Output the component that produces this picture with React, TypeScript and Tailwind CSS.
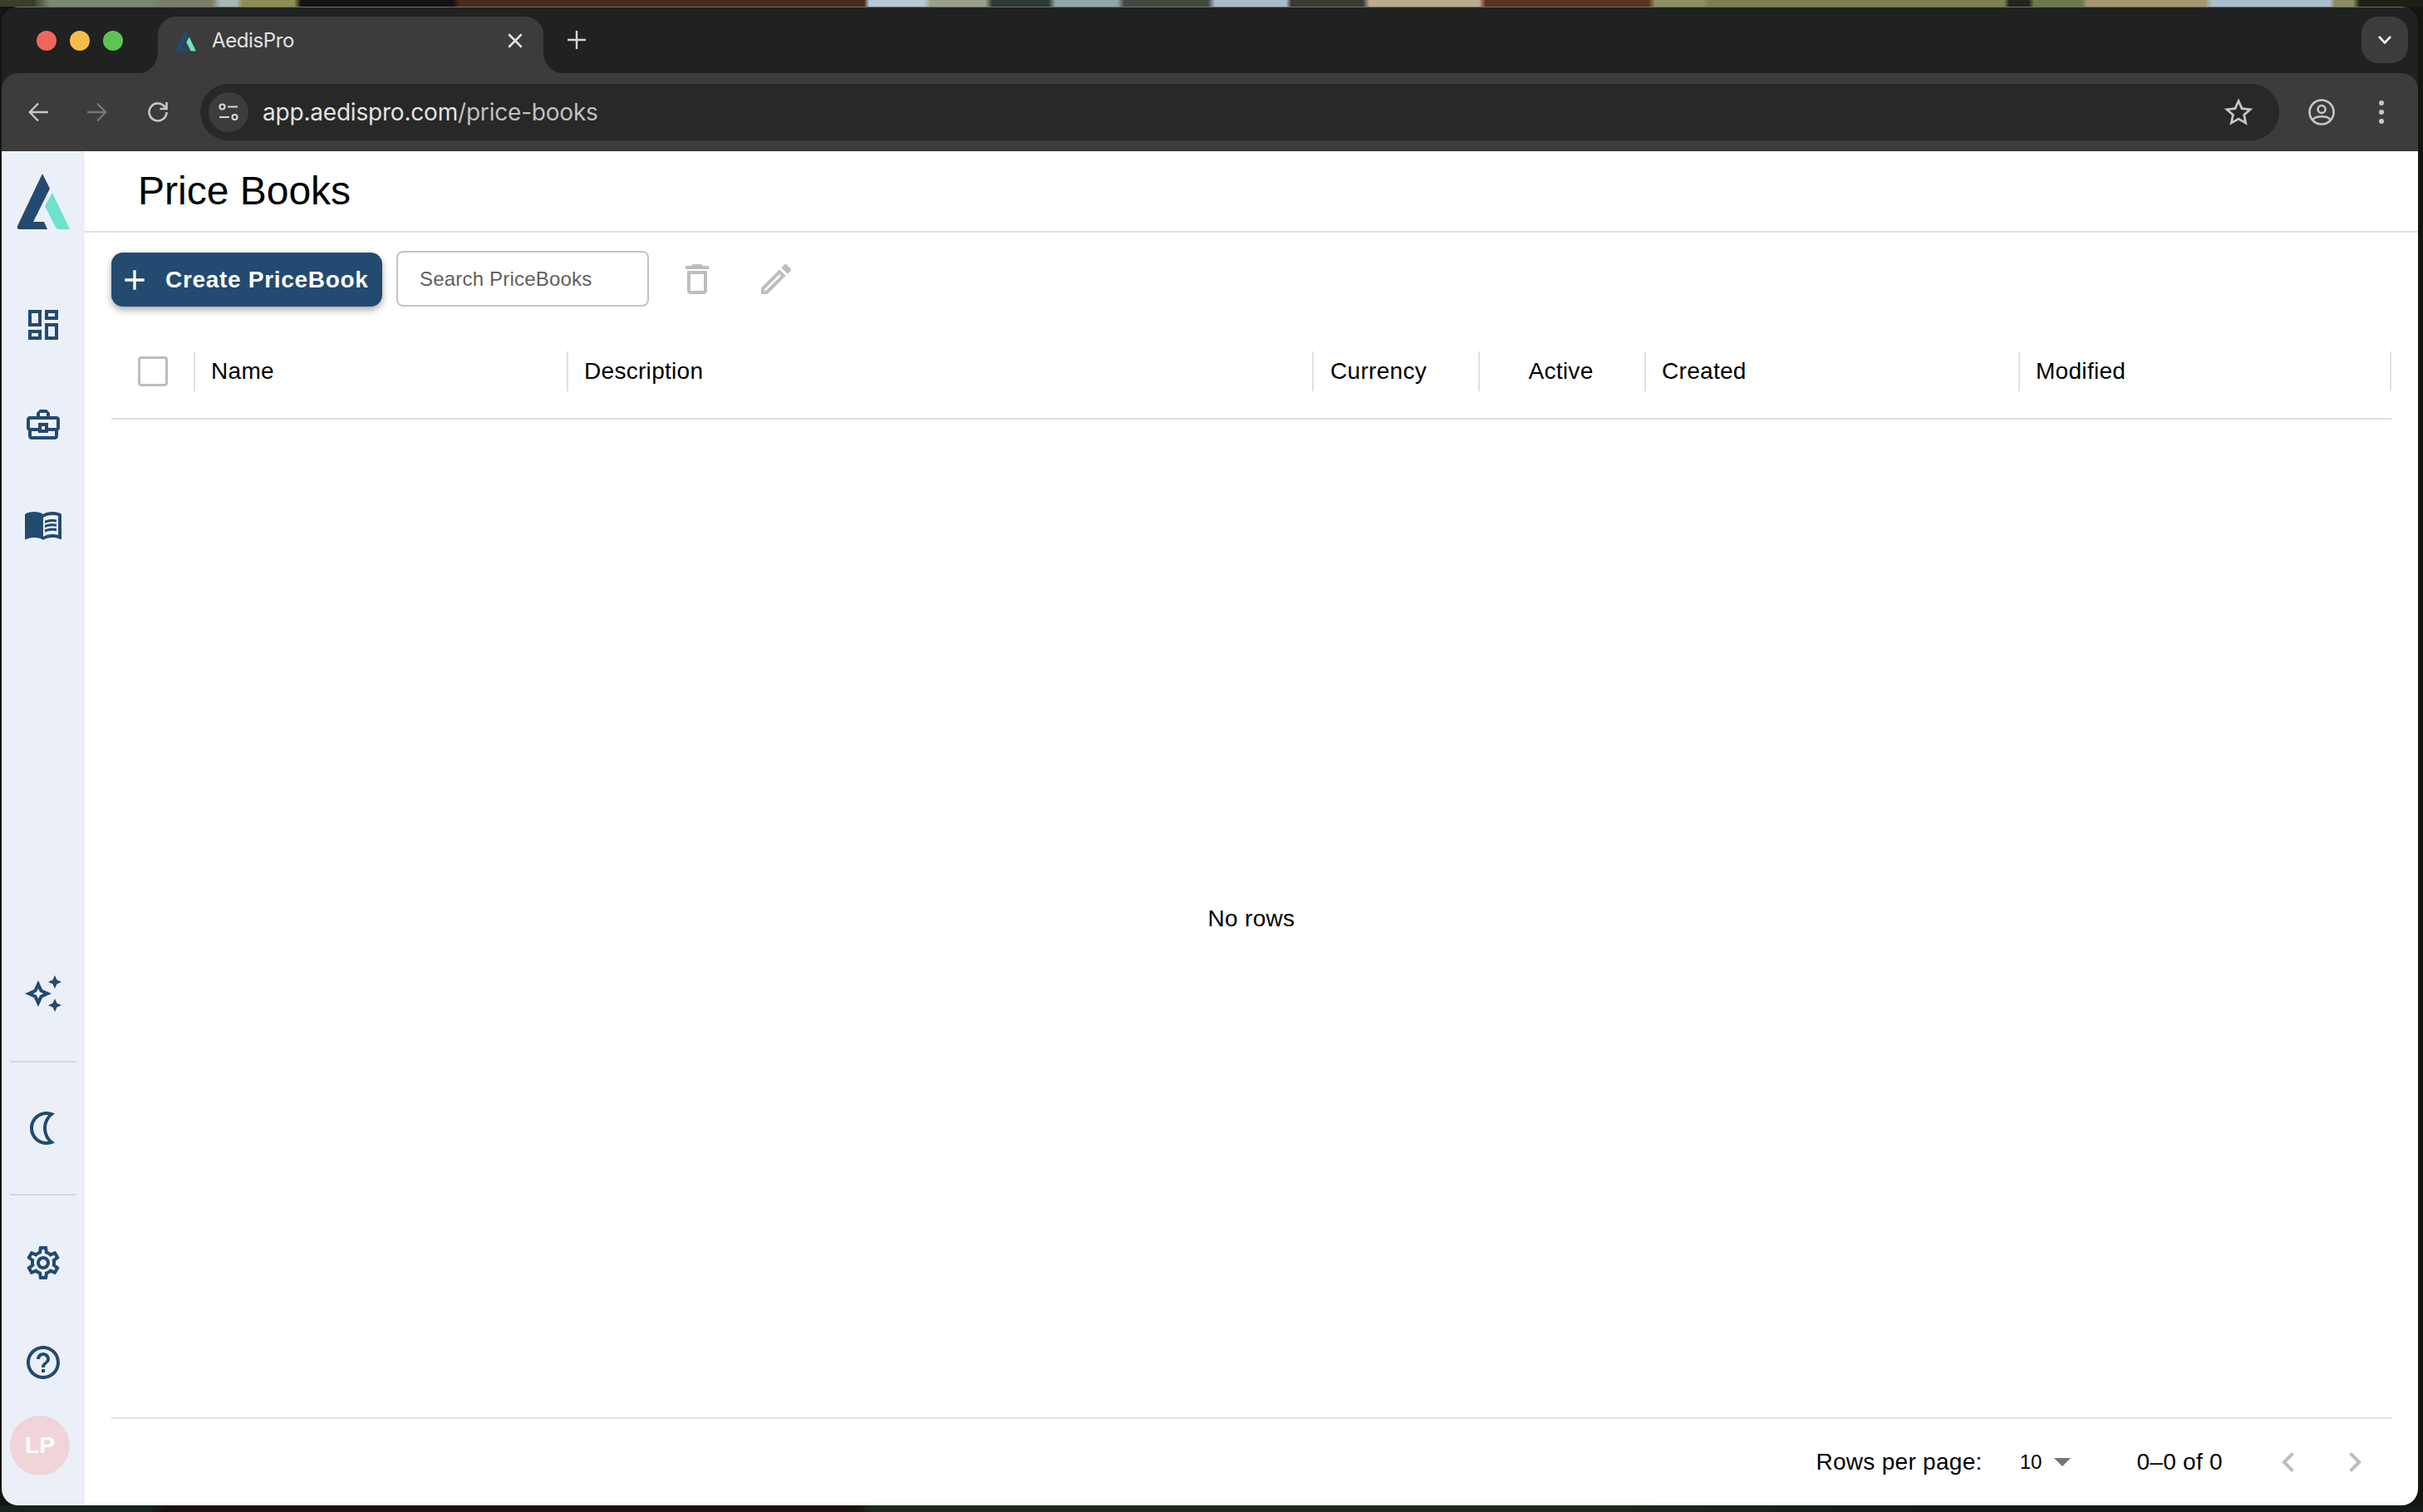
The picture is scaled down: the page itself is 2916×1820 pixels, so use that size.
import React from 'react';

const ICONS = {
  dashboard: 'M19 5v2h-4V5h4M9 5v6H5V5h4m10 8v6h-4v-6h4M9 17v2H5v-2h4M21 3h-8v6h8V3zM11 3H3v10h8V3zm10 8h-8v10h8V11zm-10 4H3v6h8v-6z',
  work: 'M20 7h-4V5l-2-2h-4L8 5v2H4c-1.1 0-2 .9-2 2v5c0 .75.4 1.38 1 1.73V19c0 1.11.89 2 2 2h14c1.11 0 2-.89 2-2v-3.28c.59-.35 1-.99 1-1.72V9c0-1.1-.9-2-2-2zM10 5h4v2h-4V5zM4 9h16v5h-5v-3H9v3H4V9zm9 6h-2v-2h2v2zm6 4H5v-3h4v1h6v-1h4v3z',
  book: 'M21 5c-1.11-.35-2.33-.5-3.5-.5-1.95 0-4.05.4-5.5 1.5-1.45-1.1-3.55-1.5-5.5-1.5S2.45 4.9 1 6v14.65c0 .25.25.5.5.5.1 0 .15-.05.25-.05C3.1 20.45 5.05 20 6.5 20c1.95 0 4.05.4 5.5 1.5 1.35-.85 3.8-1.5 5.5-1.5 1.65 0 3.35.3 4.75 1.05.1.05.15.05.25.05.25 0 .5-.25.5-.5V6c-.6-.45-1.25-.75-2-1zm0 13.5c-1.1-.35-2.3-.5-3.5-.5-1.7 0-4.15.65-5.5 1.5V8c1.35-.85 3.8-1.5 5.5-1.5 1.2 0 2.4.15 3.5.5v11.5zM17.5 10.5c.88 0 1.73.09 2.5.26V9.24c-.79-.15-1.64-.24-2.5-.24-1.7 0-3.24.29-4.5.83v1.66c1.13-.64 2.7-.99 4.5-.99zM13 12.49v1.66c1.13-.64 2.7-.99 4.5-.99.88 0 1.73.09 2.5.26V11.9c-.79-.15-1.64-.24-2.5-.24-1.7 0-3.24.3-4.5.83zm4.5 1.84c-1.7 0-3.24.29-4.5.83v1.66c1.13-.64 2.7-.99 4.5-.99.88 0 1.73.09 2.5.26v-1.52c-.79-.16-1.64-.24-2.5-.24z',
  sparkle: 'M19 9l1.25-2.75L23 5l-2.75-1.25L19 1l-1.25 2.75L15 5l2.75 1.25L19 9zm-7.5.5L9 4 6.5 9.5 1 12l5.5 2.5L9 20l2.5-5.5L17 12l-5.5-2.5zm-1.51 3.49L9 15.17l-.99-2.18L5.83 12l2.18-.99L9 8.83l.99 2.18 2.18.99-2.18.99zM19 15l-1.25 2.75L15 19l2.75 1.25L19 23l1.25-2.75L23 19l-2.75-1.25L19 15z',
  moon: 'M14 4c-4.41 0-8 3.59-8 8s3.59 8 8 8c.34 0 .68-.02 1.01-.07C13.1 17.77 12 14.95 12 12s1.1-5.77 3.01-7.93C14.68 4.02 14.34 4 14 4m0-2c1.82 0 3.53.49 5 1.35-2.99 1.73-5 4.95-5 8.65s2.01 6.92 5 8.65c-1.47.86-3.18 1.35-5 1.35C8.48 22 4 17.52 4 12S8.48 2 14 2z',
  gear: 'M19.43 12.98c.04-.32.07-.64.07-.98 0-.34-.03-.66-.07-.98l2.11-1.65c.19-.15.24-.42.12-.64l-2-3.46c-.09-.16-.26-.25-.44-.25-.06 0-.12.01-.17.03l-2.49 1c-.52-.4-1.08-.73-1.69-.98l-.38-2.65C14.46 2.18 14.25 2 14 2h-4c-.25 0-.46.18-.49.42l-.38 2.65c-.61.25-1.17.59-1.69.98l-2.49-1c-.06-.02-.12-.03-.18-.03-.17 0-.34.09-.43.25l-2 3.46c-.13.22-.07.49.12.64l2.11 1.65c-.04.32-.07.65-.07.98 0 .33.03.66.07.98l-2.11 1.65c-.19.15-.24.42-.12.64l2 3.46c.09.16.26.25.44.25.06 0 .12-.01.17-.03l2.49-1c.52.4 1.08.73 1.69.98l.38 2.65c.03.24.24.42.49.42h4c.25 0 .46-.18.49-.42l.38-2.65c.61-.25 1.17-.59 1.69-.98l2.49 1c.06.02.12.03.18.03.17 0 .34-.09.43-.25l2-3.46c.12-.22.07-.49-.12-.64l-2.11-1.65zm-1.98-1.71c.04.31.05.52.05.73 0 .21-.02.43-.05.73l-.14 1.13.89.7 1.08.84-.7 1.21-1.27-.51-1.04-.42-.9.68c-.43.32-.84.56-1.25.73l-1.06.43-.16 1.13-.2 1.35h-1.4l-.19-1.35-.16-1.13-1.06-.43c-.43-.18-.83-.41-1.23-.71l-.91-.7-1.06.43-1.27.51-.7-1.21 1.08-.84.89-.7-.14-1.13c-.03-.31-.05-.54-.05-.74s.02-.43.05-.73l.14-1.13-.89-.7-1.08-.84.7-1.21 1.27.51 1.04.42.9-.68c.43-.32.84-.56 1.25-.73l1.06-.43.16-1.13.2-1.35h1.39l.19 1.35.16 1.13 1.06.43c.43.18.83.41 1.23.71l.91.7 1.06-.43 1.27-.51.7 1.21-1.07.85-.89.7.14 1.13zM12 8c-2.21 0-4 1.79-4 4s1.79 4 4 4 4-1.79 4-4-1.79-4-4-4zm0 6c-1.1 0-2-.9-2-2s.9-2 2-2 2 .9 2 2-.9 2-2 2z',
  help: 'M11 18h2v-2h-2v2zm1-16C6.48 2 2 6.48 2 12s4.48 10 10 10 10-4.48 10-10S17.52 2 12 2zm0 18c-4.41 0-8-3.59-8-8s3.59-8 8-8 8 3.59 8 8-3.59 8-8 8zm0-14c-2.21 0-4 1.79-4 4h2c0-1.1.9-2 2-2s2 .9 2 2c0 2-3 1.75-3 5h2c0-2.25 3-2.5 3-5 0-2.21-1.79-4-4-4z',
  add: 'M19 13h-6v6h-2v-6H5v-2h6V5h2v6h6v2z',
  trash: 'M6 19c0 1.1.9 2 2 2h8c1.1 0 2-.9 2-2V7H6v12zM8 9h8v10H8V9zm7.5-5-1-1h-5l-1 1H5v2h14V4z',
  edit: 'M3 17.25V21h3.75L17.81 9.94l-3.75-3.75L3 17.25zM5.92 19H5v-.92l9.06-9.06.92.92L5.92 19zM20.71 5.63l-2.34-2.34c-.39-.39-1.02-.39-1.41 0l-1.83 1.83 3.75 3.75 1.83-1.83c.39-.39.39-1.02 0-1.41z',
  left: 'M15.41 16.59 10.83 12l4.58-4.59L14 6l-6 6 6 6 1.41-1.41z',
  right: 'M8.59 16.59 13.17 12 8.59 7.41 10 6l6 6-6 6-1.41-1.41z',
};

const Icon = ({ d, className }: { d: string; className: string }) => (
  <svg viewBox="0 0 24 24" fill="currentColor" className={className}>
    <path d={d} />
  </svg>
);

const Logo = ({ className }: { className: string }) => (
  <svg viewBox="20 205 66 75" className={className}>
    <path d="M52 209 L61 227 L41 267 L54 267 L58 276 L25 276 Q21 276 22 272 Z" fill="#234a70" />
    <path d="M64 232 L85 276 L72 276 Q69 276 68 274 L55 248 Z" fill="#6ee2cc" />
  </svg>
);

const Flare = ({ side }: { side: 'left' | 'right' }) => (
  <div className={side === 'left' ? 'absolute bottom-0 -left-[26px] w-[26px] h-[26px] bg-[#3c3c3c]' : 'absolute bottom-0 -right-[26px] w-[26px] h-[26px] bg-[#3c3c3c]'}>
    <div className={side === 'left' ? 'w-full h-full bg-[#202221] rounded-br-[26px]' : 'w-full h-full bg-[#202221] rounded-bl-[26px]'} />
  </div>
);

const COLUMNS = [
  { name: 'Name', width: 'w-[449px]', cls: 'pl-[19px]' },
  { name: 'Description', width: 'w-[897px]', cls: 'pl-[19px]' },
  { name: 'Currency', width: 'w-[200px]', cls: 'pl-[20px]' },
  { name: 'Active', width: 'w-[200px]', cls: 'justify-center pr-[3px]' },
  { name: 'Created', width: 'w-[450px]', cls: 'pl-[19px]' },
  { name: 'Modified', width: 'w-[447px]', cls: 'pl-[19px]' },
];

const Sidebar = () => (
  <aside className="w-[100px] shrink-0 bg-[#ebf0f8] flex flex-col items-center text-[#234a70] pt-[23px]">
    <Logo className="w-[66px] h-[75px] shrink-0" />
    <Icon d={ICONS.dashboard} className="w-[48px] h-[48px] mt-[87px] shrink-0" />
    <Icon d={ICONS.work} className="w-[48px] h-[48px] mt-[72px] shrink-0" />
    <Icon d={ICONS.book} className="w-[48px] h-[48px] mt-[72px] shrink-0" />
    <div className="flex-1" />
    <Icon d={ICONS.sparkle} className="w-[48px] h-[48px] shrink-0" />
    <div className="w-[80px] h-[2px] bg-[#d0d6e2] mt-[57px] shrink-0" />
    <Icon d={ICONS.moon} className="w-[48px] h-[48px] mt-[55px] shrink-0" />
    <div className="w-[80px] h-[2px] bg-[#d0d6e2] mt-[55px] shrink-0" />
    <Icon d={ICONS.gear} className="w-[48px] h-[48px] mt-[57px] shrink-0" />
    <Icon d={ICONS.help} className="w-[48px] h-[48px] mt-[72px] shrink-0" />
    <div className="w-[72px] h-[72px] rounded-full bg-[#f0d4d8] text-white font-bold text-[28px] flex items-center justify-center self-start ml-[10px] mt-[40px] mb-[36px] shrink-0">
      LP
    </div>
  </aside>
);

const BrowserChrome = () => (
  <>
    <div className="h-[80px] bg-[#202221] border-t border-[#6a6b6a] flex items-start relative shrink-0">
      <div className="flex items-center gap-[16px] pl-[42px] pt-[28px] w-[188px]">
        <div className="w-[24px] h-[24px] rounded-full bg-[#f1675d]" />
        <div className="w-[24px] h-[24px] rounded-full bg-[#f8bd49]" />
        <div className="w-[24px] h-[24px] rounded-full bg-[#5ec454]" />
      </div>
      <div className="relative mt-[11px] w-[464px] h-[69px] bg-[#3c3c3c] rounded-t-[22px] flex items-center pl-[20px] pr-[24px] pb-[12px] text-[#e3e3e3]">
        <Flare side="left" />
        <Flare side="right" />
        <Logo className="w-[27px] h-[29px]" />
        <span className="ml-[18px] text-[24px] tracking-[-0.4px] font-['Inter',sans-serif] flex-1">AedisPro</span>
        <svg viewBox="0 0 20 20" className="w-[20px] h-[20px]" stroke="currentColor" strokeWidth="2.6" strokeLinecap="round">
          <path d="M3 3 L17 17 M17 3 L3 17" />
        </svg>
      </div>
      <svg viewBox="0 0 20 20" className="w-[22px] h-[22px] ml-[29px] mt-[28px] text-[#d6d6d6]" stroke="currentColor" strokeWidth="2.2">
        <path d="M10 0 V20 M0 10 H20" />
      </svg>
      <div className="ml-auto mr-[12px] mt-[11px] w-[56px] h-[56px] rounded-[20px] bg-[#3c3c3c] flex items-center justify-center text-[#eee]">
        <svg viewBox="0 0 16 10" className="w-[16px] h-[10px]" fill="none" stroke="currentColor" strokeWidth="2.6">
          <path d="M1 1 L8 8.5 L15 1" />
        </svg>
      </div>
    </div>
    <div className="h-[94px] bg-[#3c3c3c] rounded-t-[20px] border-b border-[#333] flex items-center text-[#c7c7c7] shrink-0 relative font-['Inter',sans-serif]">
      <svg viewBox="0 0 24 24" className="w-[24px] h-[24px] ml-[32px]" fill="none" stroke="currentColor" strokeWidth="2.4">
        <path d="M24 12 H2 M12 1.5 L1.8 12 L12 22.5" />
      </svg>
      <svg viewBox="0 0 24 24" className="w-[24px] h-[24px] ml-[47px] text-[#757575]" fill="none" stroke="currentColor" strokeWidth="2.4">
        <path d="M0 12 H22 M12 1.5 L22.2 12 L12 22.5" />
      </svg>
      <svg viewBox="0 0 26 26" className="w-[26px] h-[26px] ml-[48px]" fill="none" stroke="currentColor" strokeWidth="2.6">
        <path d="M22 7.5 A10.5 10.5 0 1 0 23.5 13" />
        <path d="M23.5 1 V9 H15.5" />
      </svg>
      <div className="ml-[38px] w-[2502px] h-[68px] rounded-full bg-[#282828] flex items-center pl-[10px] pr-[31px]">
        <div className="w-[48px] h-[48px] rounded-full bg-[#3c3c3c] flex items-center justify-center">
          <svg viewBox="0 0 24 22" className="w-[24px] h-[22px]" fill="none" stroke="#d6d6d6" strokeWidth="2.2">
            <circle cx="4.5" cy="4.5" r="3" />
            <path d="M11 4.5 H23 M1 17 H13" />
            <circle cx="19.5" cy="17" r="3" />
          </svg>
        </div>
        <span className="ml-[17px] text-[28px] tracking-[-0.2px] text-[#e3e3e3] flex-1 font-['Inter',sans-serif]">
          app.aedispro.com<span className="text-[#c0c0c0]">/price-books</span>
        </span>
        <svg viewBox="0 0 24 24" className="w-[36px] h-[36px]" fill="none" stroke="currentColor" strokeWidth="1.8">
          <path d="M12 3 L14.7 9.1 L21.4 9.8 L16.4 14.2 L17.8 20.7 L12 17.4 L6.2 20.7 L7.6 14.2 L2.6 9.8 L9.3 9.1 Z" />
        </svg>
      </div>
      <svg viewBox="0 0 32 32" className="w-[32px] h-[32px] ml-[35px]" fill="none" stroke="currentColor" strokeWidth="2.6">
        <circle cx="16" cy="16" r="14.5" />
        <circle cx="16" cy="12.5" r="4.5" />
        <path d="M5.5 25 C9 20 23 20 26.5 25" />
      </svg>
      <div className="ml-[53px] flex flex-col gap-[5px]">
        <div className="w-[6px] h-[6px] rounded-full bg-[#c7c7c7]" />
        <div className="w-[6px] h-[6px] rounded-full bg-[#c7c7c7]" />
        <div className="w-[6px] h-[6px] rounded-full bg-[#c7c7c7]" />
      </div>
    </div>
  </>
);

const PriceBooks = () => (
  <main className="flex-1 min-w-0 flex flex-col bg-white">
    <div className="h-[98px] shrink-0 border-b-2 border-[#e0e0e0] pl-[64px] flex items-center">
      <h1 className="text-[48px] leading-none text-black">Price Books</h1>
    </div>
    <div className="flex-1 flex flex-col px-[32px] min-h-0">
      <div className="flex items-center mt-[22px] h-[67px] shrink-0">
        <button className="mt-[2px] w-[326px] h-[65px] bg-[#234a70] rounded-[14px] text-white font-bold text-[28px] tracking-[0.7px] flex items-center pl-[8px] shadow-[0_4px_8px_rgba(0,0,0,0.35)]">
          <Icon d={ICONS.add} className="w-[40px] h-[40px]" />
          <span className="ml-[17px]">Create PriceBook</span>
        </button>
        <div className="ml-[17px] w-[304px] h-[67px] border-2 border-[#c4c4c4] rounded-[8px] flex items-center pl-[26px] text-[24px] tracking-[0.2px] text-[#5f5f5f]">
          Search PriceBooks
        </div>
        <Icon d={ICONS.trash} className="w-[48px] h-[48px] ml-[34px] mt-px text-[#bdbdbd]" />
        <Icon d={ICONS.edit} className="w-[48px] h-[48px] ml-[47px] mt-px text-[#bdbdbd]" />
      </div>
      <div className="flex items-center mt-[24px] h-[112px] pb-[2px] border-b-2 border-[#e0e0e0] shrink-0">
        <div className="w-[101px] h-[48px] border-r-2 border-[#e0e0e0] flex items-center justify-center pl-px shrink-0">
          <div className="w-[36px] h-[36px] border-[3.5px] border-[#bdbdbd] rounded-[4px]" />
        </div>
        {COLUMNS.map(col => (
          <div key={col.name} className={`${col.width} ${col.cls} h-[48px] border-r-2 border-[#e0e0e0] flex items-center text-[28px] tracking-[0.3px] text-black shrink-0`}>
            {col.name}
          </div>
        ))}
      </div>
      <div className="flex-1 flex items-center justify-center text-[28px] tracking-[0.3px] text-black">No rows</div>
      <div className="h-[106px] shrink-0 border-t-2 border-[#e0e0e0] flex items-center justify-end pr-[20px] text-black text-[28px] tracking-[0.3px]">
        <span>Rows per page:</span>
        <span className="ml-[45px] text-[24px] tracking-normal">10</span>
        <div className="ml-[15px] w-0 h-0 border-x-[10px] border-x-transparent border-t-[10px] border-t-[#757575]" />
        <span className="ml-[79px]">0–0 of 0</span>
        <Icon d={ICONS.left} className="w-[48px] h-[48px] ml-[55px] text-[#bdbdbd]" />
        <Icon d={ICONS.right} className="w-[48px] h-[48px] ml-[32px] text-[#bdbdbd]" />
      </div>
    </div>
  </main>
);

export default function App() {
  return (
    <div className="w-[2916px] h-[1820px] bg-[#14150f] flex flex-col overflow-hidden font-['Liberation_Sans',Arial,sans-serif]">
      <div className="h-[8px] shrink-0 bg-[linear-gradient(90deg,#3a3f2a_40px,#7a8a70_60px,#7a8a70_180px,#7b7f6a_190px,#7b7f6a_255px,#a9b7b8_265px,#a9b7b8_285px,#8d8e52_292px,#8d8e52_354px,#151311_362px,#151311_545px,#4a2a1a_553px,#4a2a1a_1040px,#b6c9d4_1046px,#b6c9d4_1112px,#9a9f8c_1120px,#9a9f8c_1186px,#2e3a33_1194px,#2e3a33_1262px,#8fa6ad_1270px,#8fa6ad_1345px,#444a42_1353px,#444a42_1454px,#a9bccb_1462px,#a9bccb_1548px,#3a3a30_1554px,#3a3a30_1640px,#bda98e_1648px,#bda98e_1780px,#5a3320_1788px,#5a3320_1984px,#8f9060_1992px,#8f9060_2050px,#7c7f4e_2056px,#7c7f4e_2412px,#22261c_2418px,#22261c_2442px,#6c7a4c_2448px,#6c7a4c_2505px,#a89670_2512px,#a89670_2654px,#aac0cf_2662px,#aac0cf_2804px,#8a8d60_2810px,#8a8d60_2832px,#1c1e18_2840px)]" />
      <div className="flex-1 min-h-0 ml-[2px] mr-[6px] rounded-[20px] overflow-hidden flex flex-col bg-[#202221]">
        <BrowserChrome />
        <div className="flex-1 min-h-0 flex">
          <Sidebar />
          <PriceBooks />
        </div>
      </div>
      <div className="h-[8px] shrink-0 bg-[linear-gradient(90deg,#13241f_180px,#1a120c_200px,#1a120c_1030px,#1c2a1c_1050px,#1c2a1c_1900px,#141a18_2300px)]" />
    </div>
  );
}
